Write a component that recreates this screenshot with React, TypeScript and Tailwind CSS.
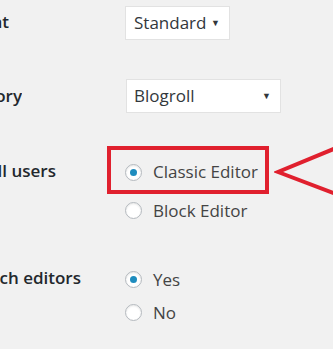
import React from "react";

const Radio = ({ checked }: { checked?: boolean }) => (
  <span className="flex h-[17px] w-[17px] shrink-0 items-center justify-center rounded-full border border-[#b4b9be] bg-white shadow-[inset_0_1px_2px_rgba(0,0,0,0.1)]">
    {checked && <span className="h-[7px] w-[7px] rounded-full bg-[#1e8cbe]" />}
  </span>
);

// labels are cut off at the left edge of the screenshot, so only their tail shows
const Label = ({ text, end }: { text: string; end: string }) => (
  <div className="w-[107px] shrink-0">
    <div className={`flex justify-end overflow-hidden whitespace-nowrap ${end}`}>
      <span className="shrink-0 font-semibold text-[#23282d]">{text}</span>
    </div>
  </div>
);

export default function App() {
  return (
    <div
      className="relative h-[349px] w-[333px] overflow-hidden bg-[#f1f1f1] text-[17px]"
      style={{ fontFamily: '"Open Sans", "Noto Sans", sans-serif' }}
    >
      {/* Default Post Format */}
      <div className="flex items-center pt-[4px]">
        <Label text="Default Post Format" end="w-[9px]" />
        <div className="ml-[18px] mt-[2px] flex h-[34px] w-[105px] items-center justify-between border border-[#e2e2e2] bg-white pl-[8px] pr-[9px] text-[#32373c]">
          <span>Standard</span>
          <span className="text-[9px]">▼</span>
        </div>
      </div>

      {/* Default Link Category */}
      <div className="mt-[39px] flex items-center">
        <Label text="Default Link Category" end="w-[22px]" />
        <div className="ml-[19px] flex h-[34px] w-[155px] items-center justify-between border border-[#e2e2e2] bg-white pl-[7px] pr-[9px] text-[#32373c]">
          <span>Blogroll</span>
          <span className="text-[9px]">▼</span>
        </div>
      </div>

      {/* Default editor */}
      <div className="mt-[33px] flex items-start">
        <div className="pt-[12px]">
          <Label text="Default editor for all users" end="w-[56px]" />
        </div>
        <div className="flex flex-col text-[#444]">
          <div className="flex h-[48px] w-[162px] items-center gap-[11px] border-[4px] border-[#e0202e] pl-[14px] pt-[4px]">
            <Radio checked />
            <span>Classic Editor</span>
          </div>
          <div className="flex items-center gap-[11px] pl-[18px] pt-[4px]">
            <Radio />
            <span>Block Editor</span>
          </div>
        </div>
      </div>

      {/* Allow users to switch editors */}
      <div className="mt-[41px] flex items-start">
        <Label text="Allow users to switch editors" end="w-[81px]" />
        <div className="flex flex-col gap-[8px] pl-[18px] pt-[2px] text-[#444]">
          <div className="flex items-center gap-[11px]">
            <Radio checked />
            <span>Yes</span>
          </div>
          <div className="flex items-center gap-[11px]">
            <Radio />
            <span>No</span>
          </div>
        </div>
      </div>

      {/* annotation arrow */}
      <svg className="absolute left-[274px] top-[142px]" width="62" height="56" viewBox="0 0 62 56">
        <polyline points="62,6 4,30 62,52" fill="none" stroke="#e0202e" strokeWidth="4" strokeLinejoin="miter" />
      </svg>
    </div>
  );
}
